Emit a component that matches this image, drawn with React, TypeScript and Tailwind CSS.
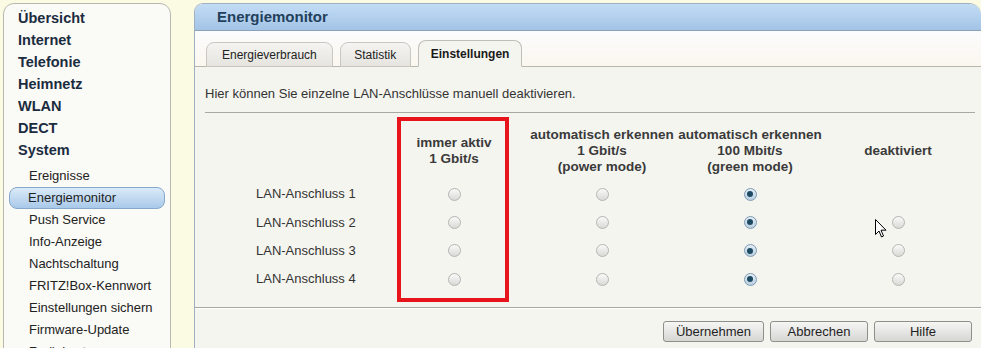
import React from 'react';

const mainNav = ['Übersicht', 'Internet', 'Telefonie', 'Heimnetz', 'WLAN', 'DECT', 'System'];
const subNav = [
  'Ereignisse',
  'Energiemonitor',
  'Push Service',
  'Info-Anzeige',
  'Nachtschaltung',
  'FRITZ!Box-Kennwort',
  'Einstellungen sichern',
  'Firmware-Update',
  'Zurücksetzen',
];

const columns = [
  ['immer aktiv', '1 Gbit/s'],
  ['automatisch erkennen', '1 Gbit/s', '(power mode)'],
  ['automatisch erkennen', '100 Mbit/s', '(green mode)'],
  ['deaktiviert'],
];

// which radio is shown per column; null = no radio
const ports = [
  { name: 'LAN-Anschluss 1', radios: [false, false, true, null] },
  { name: 'LAN-Anschluss 2', radios: [false, false, true, false] },
  { name: 'LAN-Anschluss 3', radios: [false, false, true, false] },
  { name: 'LAN-Anschluss 4', radios: [false, false, true, false] },
];

const Radio: React.FC<{ checked: boolean }> = ({ checked }) => (
  <div
    className={`w-[13px] h-[13px] rounded-full border flex items-center justify-center ${
      checked
        ? 'border-[#7d9bb3] bg-gradient-to-b from-[#e4eef6] to-[#b9cedf]'
        : 'border-[#b4b4b0] bg-gradient-to-b from-[#fafafa] to-[#d9d9d6]'
    }`}
  >
    {checked && <div className="w-[6px] h-[6px] rounded-full bg-[#1d4a63]" />}
  </div>
);

const Cursor = () => (
  <svg width="12" height="19" viewBox="0 0 12 19" className="absolute left-[875px] top-[219px]">
    <path d="M0.5 0.5 L0.5 15.5 L4 12 L6.5 18 L8.5 17 L6 11.2 L11 11.2 Z" fill="#fff" stroke="#000" strokeWidth="1" strokeLinejoin="round" />
  </svg>
);

export default function App() {
  return (
    <div className="relative w-[981px] h-[348px] overflow-hidden bg-[#fbfbe4] flex font-['Liberation_Sans',Arial,sans-serif]">
      {/* Sidebar */}
      <div className="ml-[3px] mt-[3px] w-[168px] h-[360px] shrink-0 rounded-t-[11px] border border-[#b9b9b2] bg-[#fafaf6] pt-[3px]">
        {mainNav.map((item) => (
          <div key={item} className="pl-[14px] h-[22px] leading-[22px] text-[14.5px] font-bold text-[#1b2c3f]">
            {item}
          </div>
        ))}
        <div className="mt-[4px]">
          {subNav.map((item) => (
            <div
              key={item}
              className={`h-[22px] leading-[20px] text-[13px] text-[#222] whitespace-nowrap ${
                item === 'Energiemonitor'
                  ? 'mx-[5px] pl-[18px] rounded-[8px] border border-[#86a9cb] bg-gradient-to-b from-[#dbeaf8] to-[#a9c9e9]'
                  : 'pl-[24px] border border-transparent'
              }`}
            >
              {item}
            </div>
          ))}
        </div>
      </div>

      {/* Main panel */}
      <div className="ml-[23px] mt-[3px] flex-1 flex flex-col border-l border-t border-[#9fb0c0] rounded-tl-[9px] rounded-tr-[12px] overflow-hidden">
        <div className="h-[27px] shrink-0 flex items-center pl-[22px] bg-gradient-to-b from-[#c3dcf5] to-[#a3c4e6] border-b border-[#8aa3bb]">
          <span className="text-[15px] font-bold text-[#22405b]">Energiemonitor</span>
        </div>

        {/* Tabs */}
        <div className="h-[36px] shrink-0 flex items-end pl-[11px] bg-gradient-to-b from-[#fbfcfd] to-[#fbf7ef] border-b border-[#b7b7b0]">
          <div className="h-[25px] -mb-px px-[15px] flex items-center rounded-t-[8px] border border-[#c9c7c1] bg-gradient-to-b from-[#f5f4f1] to-[#e6e4df] text-[12px] text-[#222]">
            Energieverbrauch
          </div>
          <div className="ml-[7px] h-[25px] -mb-px px-[13.5px] flex items-center rounded-t-[8px] border border-[#c9c7c1] bg-gradient-to-b from-[#f5f4f1] to-[#e6e4df] text-[12px] text-[#222]">
            Statistik
          </div>
          <div className="ml-[7px] h-[27px] -mb-px px-[12px] flex items-center rounded-t-[8px] border border-[#c0beb8] border-b-[#f5f5f0] bg-[#f5f5f0] text-[12px] font-bold text-[#1a1a1a]">
            Einstellungen
          </div>
        </div>

        {/* Content */}
        <div className="h-[241px] shrink-0 bg-[#f5f5f0] border-b border-[#a9a9a3]">
          <p className="pt-[19px] pl-[10px] text-[13px] leading-[16px] text-[#333]">
            Hier können Sie einzelne LAN-Anschlüsse manuell deaktivieren.
          </p>
          <div className="mt-[10px] ml-[10px] mr-[6px] border-t border-[#a9a9a3]" />

          <div className="relative pt-[8px]">
            <div className="grid grid-cols-[185px_148px_148px_148px_148px]">
              <div className="h-[59px]" />
              {columns.map((lines, i) => (
                <div key={i} className="h-[59px] flex flex-col items-center justify-center text-[13.5px] leading-[16px] font-bold text-[#3a3a3a] text-center whitespace-nowrap">
                  {lines.map((l, j) => (
                    <span key={j}>{l}</span>
                  ))}
                </div>
              ))}
              {ports.map((p) => (
                <React.Fragment key={p.name}>
                  <div className="h-[28.3px] pl-[61px] flex items-center text-[13px] text-[#333]">{p.name}</div>
                  {p.radios.map((r, i) => (
                    <div key={i} className="h-[28.3px] flex items-center justify-center">
                      {r !== null && <Radio checked={r} />}
                    </div>
                  ))}
                </React.Fragment>
              ))}
            </div>
            {/* red highlight */}
            <div className="absolute left-[202px] top-[4px] w-[112px] h-[185px] border-[4px] border-[#e8141c] pointer-events-none" />
          </div>
        </div>

        {/* Footer */}
        <div className="flex-1 bg-[#f5f5f0] flex justify-end items-start gap-[6px] pt-[12px] pr-[9px] border-t border-[#ffffff]">
          <button className="w-[101px] h-[21px] rounded-[3px] border border-[#8e8e8a] bg-gradient-to-b from-[#f6f6f5] to-[#d6d6d3] text-[13px] text-[#1f1f1f]">
            Übernehmen
          </button>
          <button className="w-[98px] h-[21px] rounded-[3px] border border-[#8e8e8a] bg-gradient-to-b from-[#f6f6f5] to-[#d6d6d3] text-[13px] text-[#1f1f1f]">
            Abbrechen
          </button>
          <button className="w-[98px] h-[21px] rounded-[3px] border border-[#8e8e8a] bg-gradient-to-b from-[#f6f6f5] to-[#d6d6d3] text-[13px] text-[#1f1f1f]">
            Hilfe
          </button>
        </div>
      </div>

      <Cursor />
    </div>
  );
}
